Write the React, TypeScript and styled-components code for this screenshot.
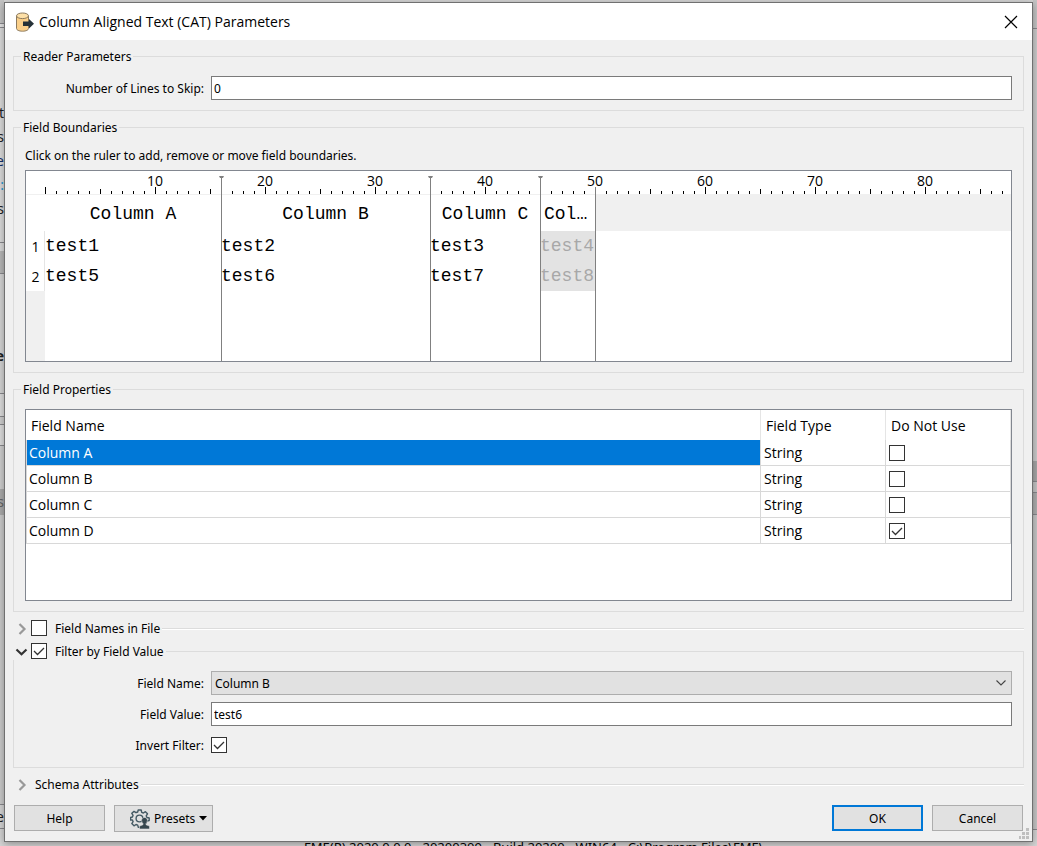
import React, { useId, useState } from "react";
import styled, { createGlobalStyle, css } from "styled-components";

const smallFont = css`
  font: 12px/16px "Noto Sans", "Open Sans", sans-serif;
`;
const largeFont = css`
  font: 14px/20px "Open Sans", "Noto Sans", sans-serif;
`;

const GlobalStyle = createGlobalStyle`
  *, *::before, *::after { box-sizing: border-box; }
  body { margin: 0; background: #d6d6d6; color: #000; ${smallFont} }
`;

const Desktop = styled.div`
  position: relative;
  min-height: 100vh;
  padding: 2px 4px 4px;
  display: flex;
  overflow: hidden;
`;

/* ---- windows that peek out behind the dialog ---- */
const SideStrip = styled.div<{ $side: "left" | "right" }>`
  position: absolute;
  top: 0;
  bottom: 0;
  ${(p) => p.$side}: 0;
  width: 4px;
  overflow: hidden;
  display: flex;
  flex-direction: column;
`;
const Segment = styled.div<{ $h: number; $bg: string; $line?: boolean; $color?: string; $bold?: boolean }>`
  flex: none;
  height: ${(p) => p.$h}px;
  background: ${(p) => p.$bg};
  color: ${(p) => p.$color ?? "#222"};
  border-bottom: ${(p) => (p.$line ? "1px solid #8a8a8e" : "none")};
  font-size: 14px;
  line-height: 20px;
  font-weight: ${(p) => (p.$bold ? 700 : 400)};
  display: flex;
  justify-content: flex-end;
  align-items: center;
`;
const StatusText = styled.div`
  position: absolute;
  left: 304px;
  bottom: -9px;
  white-space: nowrap;
  font-size: 13px;
  line-height: 16px;
`;

/* ---- dialog shell ---- */
const Dialog = styled.main`
  position: relative;
  flex: 1;
  min-width: 0;
  display: flex;
  flex-direction: column;
  background: #f0f0f0;
  border: 1px solid #707070;
  box-shadow: 0 2px 8px rgba(0, 0, 0, 0.35);
`;
const TitleBar = styled.header`
  display: flex;
  align-items: center;
  gap: 4px;
  height: 37px;
  padding: 0 10px;
  background: #fff;
`;
const Title = styled.h1`
  ${largeFont}
  margin: 0;
  flex: 1;
`;
const CloseButton = styled.button`
  display: grid;
  place-items: center;
  width: 22px;
  height: 22px;
  padding: 0;
  border: 0;
  background: none;
`;
const Body = styled.form`
  flex: 1;
  display: flex;
  flex-direction: column;
  padding: 8px 8px 9px;
`;

/* ---- check boxes ---- */
const CheckShell = styled.span`
  display: grid;
  width: 16px;
  height: 16px;
  > * { grid-area: 1 / 1; }
  > svg { pointer-events: none; }
`;
const CheckInput = styled.input`
  appearance: none;
  margin: 0;
  width: 16px;
  height: 16px;
  border: 1px solid #333;
  background: #fff;
`;

/* ---- groups ---- */
const Group = styled.fieldset`
  margin: 0 0 8px;
  min-width: 0;
  border: 1px solid #dcdcdc;
  padding: 11px 11px 10px;
`;
const Legend = styled.legend`
  height: 17px;
  line-height: 17px;
  margin-left: -4px;
  padding: 0 2px;
`;
const ToggleLegend = styled.legend`
  margin-left: -12px;
  padding: 0 2px 0 0;
  background: #f0f0f0;
`;
const SectionHead = styled.div`
  display: flex;
  align-items: center;
  height: 17px;
  padding-left: 1px;
  white-space: nowrap;
  > ${CheckShell} { align-self: flex-start; }
`;
const SectionLabel = styled.label`
  margin-left: 8px;
`;
const PlainSectionLabel = styled.span`
  margin-left: 4px;
`;
const SectionRule = styled.span`
  flex: 1;
  margin-left: 2px;
  height: 2px;
  background: #dcdcdc;
  border-bottom: 1px solid #fff;
`;
const FoldButton = styled.button`
  display: grid;
  place-items: center;
  width: 14px;
  height: 16px;
  margin-right: 3px;
  padding: 0;
  border: 0;
  background: none;
`;
const CollapsedSection = styled.section<{ $gap: number }>`
  margin-bottom: ${(p) => p.$gap}px;
`;

/* ---- form rows ---- */
const FormGrid = styled.div`
  display: grid;
  grid-template-columns: 179px minmax(0, 1fr);
  grid-auto-rows: 24px;
  gap: 7px;
  align-items: center;
`;
const FormLabel = styled.label`
  padding-top: 2px;
  text-align: right;
`;
const TextInput = styled.input`
  ${smallFont}
  width: 100%;
  height: 24px;
  padding: 0 2px;
  border: 1px solid #7a7a7a;
  border-radius: 0;
  background: #fff;
  color: #000;
  outline: none;
`;
const SelectShell = styled.div`
  display: grid;
  align-items: center;
  > * { grid-area: 1 / 1; }
  > svg { justify-self: end; margin-right: 6px; pointer-events: none; }
`;
const Select = styled.select`
  ${smallFont}
  appearance: none;
  width: 100%;
  height: 24px;
  padding: 2px 3px 0;
  border: 1px solid #adadad;
  border-radius: 0;
  background: #e1e1e1;
  color: #000;
`;

/* ---- ruler preview ---- */
const Hint = styled.p`
  margin: 0;
  padding: 1px 0 6px;
`;
const Preview = styled.div`
  position: relative;
  height: 192px;
  overflow: hidden;
  border: 1px solid #828790;
  background: linear-gradient(#f0f0f0, #f0f0f0) 0 120px / 19px 100% no-repeat #fff;
`;
const tick = "linear-gradient(90deg, #000 1px, transparent 1px)";
const Ruler = styled.div`
  height: 23px;
  margin-left: 19px;
  padding-left: 55px;
  display: flex;
  overflow: hidden;
  background-image: ${tick}, ${tick}, ${tick};
  background-size: 11px 3px, 55px 5px, 110px 7px;
  background-position: 0 20px, 0 18px, 110px 16px;
  background-repeat: repeat-x;
`;
const RulerMark = styled.span`
  ${largeFont}
  flex: none;
  width: 110px;
  height: 16px;
  overflow: hidden;
  text-align: center;
`;
const PreviewTable = styled.table`
  width: 100%;
  table-layout: fixed;
  border-collapse: collapse;
`;
const PreviewHead = styled.th<{ $filler?: boolean }>`
  height: 37px;
  padding: 3px 4px 0;
  overflow: hidden;
  text-overflow: ellipsis;
  white-space: nowrap;
  font: 18px/24px "Liberation Mono", monospace;
  background: ${(p) => (p.$filler ? "#f0f0f0" : "#fff")};
  box-shadow: ${(p) => (p.$filler ? "none" : "inset 0 1px #f0f0f0")};
`;
const PreviewCell = styled.td<{ $off?: boolean }>`
  height: 30px;
  padding: 0;
  white-space: nowrap;
  font: 18px/24px "Liberation Mono", monospace;
  color: ${(p) => (p.$off ? "#a8a8a8" : "#000")};
  background: ${(p) => (p.$off ? "#e3e3e3" : "none")};
`;
const RowNumber = styled.th`
  ${largeFont}
  height: 30px;
  padding: 2px 0 0;
  text-align: center;
  box-shadow: inset -1px 0 #e5e5e5;
`;
const Boundary = styled.span<{ $at: number; $cap: boolean }>`
  position: absolute;
  left: ${(p) => 19 + p.$at * 11}px;
  top: ${(p) => (p.$cap ? 5 : 16)}px;
  bottom: 0;
  width: 1px;
  background: #808080;
  &::before {
    content: "";
    display: ${(p) => (p.$cap ? "block" : "none")};
    position: absolute;
    left: -2px;
    width: 5px;
    height: 2px;
    background: #808080;
    clip-path: polygon(0 0, 100% 0, 80% 100%, 20% 100%);
  }
`;

/* ---- property table ---- */
const PropertyBox = styled.div`
  height: 192px;
  border: 1px solid #828790;
  background: #fff;
`;
const PropertyTable = styled.table`
  width: 100%;
  table-layout: fixed;
  border-collapse: separate;
  border-spacing: 0;
  ${largeFont}
`;
const PropertyHead = styled.th`
  height: 30px;
  padding: 2px 5px 0;
  font-weight: 400;
  text-align: left;
  border-right: 1px solid #e5e5e5;
`;
const PropertyCell = styled.td<{ $first?: boolean; $selected?: boolean }>`
  height: 26px;
  padding: 0 ${(p) => (p.$first ? 2 : 3)}px;
  border-right: 1px solid #d8d8d8;
  border-bottom: 1px solid #d8d8d8;
  border-left: ${(p) => (p.$first ? "1px solid #d8d8d8" : "none")};
  color: ${(p) => (p.$selected ? "#fff" : "#000")};
  background: ${(p) => (p.$selected ? "#0078d7" : "#fff")};
  background-clip: padding-box;
`;

/* ---- footer ---- */
const Footer = styled.footer`
  display: flex;
  align-items: flex-start;
  gap: 9px;
  margin-top: auto;
  padding: 4px 1px 0;
`;
const Spacer = styled.span`
  flex: 1;
`;
const PushButton = styled.button<{ $primary?: boolean }>`
  ${smallFont}
  width: 91px;
  height: 26px;
  padding: 2px 0 0;
  border: ${(p) => (p.$primary ? "2px solid #0078d7" : "1px solid #adadad")};
  border-radius: 0;
  background: #e1e1e1;
  color: #000;
`;
const MenuButton = styled(PushButton)`
  width: 99px;
  height: 27px;
  padding: 0 0 0 15px;
  display: flex;
  align-items: center;
  gap: 4px;
`;
const Grip = styled.svg`
  position: absolute;
  right: 3px;
  bottom: 2px;
`;

const ReaderIcon = () => (
  <svg width="20" height="20" viewBox="0 0 20 20" aria-hidden="true">
    <path d="M1.5 4v12.500c0 1.500 2.500 2.700 6 2.700s6-1.200 6-2.700V4z" fill="#fbd08a" stroke="#8c7a5e" />
    <ellipse cx="7.500" cy="3.800" rx="6" ry="2.800" fill="#fde0a8" stroke="#8c7a5e" />
    <path d="M8 9.500h6V7l5 4.800-5 4.700V14H8z" fill="#263238" />
  </svg>
);

const PresetsIcon = () => (
  <svg width="20" height="20" viewBox="0 0 20 20" aria-hidden="true" fill="none">
    <path
      d="M8.200 1h3l.5 2.300 1.700.7 2-1.300 2.100 2.100-1.300 2 .7 1.700 2.300.5v2.500l-2.300.5-.7 1.700-5 4.500H8.200l-.5-2-1.700-.7-2 1.300-2.200-2.200 1.300-2-.7-1.600L.600 11V8.500L2.400 8l.7-1.700-1.300-2L4 2.400l2 1.300L7.700 3z"
      stroke="#455a64"
      strokeWidth="1.400"
      strokeLinejoin="round"
    />
    <circle cx="9.500" cy="9.500" r="3.400" stroke="#455a64" strokeWidth="1.400" />
    <path
      d="M14.500 8.500c1.800 0 2.900 1.300 2.900 3 0 1.300-.6 2.400-1.400 3.100v1.100l3.500 1.400V20h-10v-2.900l3.500-1.400v-1.100c-.8-.7-1.400-1.800-1.400-3.100 0-1.700 1.100-3 2.900-3z"
      fill="#37474f"
      stroke="#e1e1e1"
      strokeWidth=".6"
    />
  </svg>
);

const FoldIcon = ({ open }: { open: boolean }) =>
  open ? (
    <svg width="14" height="12" viewBox="0 0 14 12" aria-hidden="true">
      <path d="M2.500 3.500 7.500 8.200 12.500 3.500" fill="none" stroke="#333" strokeWidth="2.200" />
    </svg>
  ) : (
    <svg width="14" height="12" viewBox="0 0 14 12" aria-hidden="true">
      <path d="M5.500 1l5 5-5 5" fill="none" stroke="#999" strokeWidth="2.200" />
    </svg>
  );

function CheckBox({ id, label, initial = false }: { id?: string; label?: string; initial?: boolean }) {
  const [on, setOn] = useState(initial);
  return (
    <CheckShell>
      <CheckInput id={id} type="checkbox" aria-label={label} checked={on} onChange={() => setOn(!on)} />
      {on && (
        <svg width="16" height="16" viewBox="0 0 16 16" aria-hidden="true">
          <path d="M3 8l3.500 3.500L13 5" fill="none" stroke="#333" strokeWidth="1.300" />
        </svg>
      )}
    </CheckShell>
  );
}

const rulerMarks = [10, 20, 30, 40, 50, 60, 70, 80];
const fields = [
  { name: "Column A", width: 16, values: ["test1", "test5"], unused: false },
  { name: "Column B", width: 19, values: ["test2", "test6"], unused: false },
  { name: "Column C", width: 10, values: ["test3", "test7"], unused: false },
  { name: "Column D", width: 5, values: ["test4", "test8"], unused: true },
];
const boundaries = [16, 35, 45, 50];

const leftStrip = [
  { h: 24, bg: "#c4c4c4", line: true },
  { h: 4, bg: "#e6e6e6", line: true },
  { h: 73, bg: "#dcdcdc" },
  { h: 24, bg: "#dcdcdc", text: "t" },
  { h: 24, bg: "#dcdcdc", text: "s" },
  { h: 24, bg: "#dcdcdc", text: "e", color: "#14306b" },
  { h: 24, bg: "#dcdcdc", text: ":", color: "#1e9ad6" },
  { h: 24, bg: "#dcdcdc", text: "s" },
  { h: 22, bg: "#dcdcdc", line: true },
  { h: 8, bg: "#dcdcdc" },
  { h: 23, bg: "#b8b8b8", line: true },
  { h: 70, bg: "#d6d6d6" },
  { h: 24, bg: "#d6d6d6", text: "e", bold: true },
  { h: 26, bg: "#d6d6d6", line: true },
  { h: 23, bg: "#dedede", line: true },
  { h: 8, bg: "#d0d0d0", line: true },
  { h: 21, bg: "#dedede", line: true },
  { h: 43, bg: "#d0d0d0" },
  { h: 26, bg: "#acacac", text: "s", color: "#666" },
  { h: 290, bg: "#cccccc", line: true },
  { h: 24, bg: "#d6d6d6", text: "e", line: true },
];
const rightStrip = [
  { h: 29, bg: "#c6c6c6", line: true },
  { h: 432, bg: "#cdcdcd" },
  { h: 21, bg: "#a8a8a8", line: true },
  { h: 11, bg: "#c6c6c6", line: true },
  { h: 22, bg: "#b0b0b0", line: true },
  { h: 315, bg: "#c8c8c8", line: true },
];

type StripPart = { h: number; bg: string; line?: boolean; text?: string; color?: string; bold?: boolean };
const Strip = ({ side, parts }: { side: "left" | "right"; parts: StripPart[] }) => (
  <SideStrip $side={side} aria-hidden="true">
    {parts.map((p, i) => (
      <Segment key={i} $h={p.h} $bg={p.bg} $line={p.line} $color={p.color} $bold={p.bold}>
        {p.text}
      </Segment>
    ))}
  </SideStrip>
);

export default function App() {
  const id = useId();
  const [skip, setSkip] = useState("0");
  const [value, setValue] = useState("test6");
  return (
    <>
      <GlobalStyle />
      <Desktop>
        <Strip side="left" parts={leftStrip} />
        <Strip side="right" parts={rightStrip} />
        <StatusText aria-hidden="true">FME(R) 2020.0.0.0 - 20200309 - Build 20200 - WIN64 - C:\Program Files\FME\</StatusText>
        <Dialog>
          <TitleBar>
            <ReaderIcon />
            <Title>Column Aligned Text (CAT) Parameters</Title>
            <CloseButton type="button" aria-label="Close">
              <svg width="14" height="14" viewBox="0 0 14 14" aria-hidden="true">
                <path d="M1 1l12 12M13 1 1 13" stroke="#000" strokeWidth="1.200" />
              </svg>
            </CloseButton>
          </TitleBar>
          <Body onSubmit={(e) => e.preventDefault()}>
            <Group>
              <Legend>Reader Parameters</Legend>
              <FormGrid>
                <FormLabel htmlFor={id + "skip"}>Number of Lines to Skip:</FormLabel>
                <TextInput id={id + "skip"} value={skip} onChange={(e) => setSkip(e.target.value)} />
              </FormGrid>
            </Group>

            <Group>
              <Legend>Field Boundaries</Legend>
              <Hint>Click on the ruler to add, remove or move field boundaries.</Hint>
              <Preview>
                <Ruler>
                  {rulerMarks.map((m) => (
                    <RulerMark key={m}>{m}</RulerMark>
                  ))}
                </Ruler>
                <PreviewTable>
                  <colgroup>
                    <col style={{ width: 19 }} />
                    {fields.map((f) => (
                      <col key={f.name} style={{ width: f.width * 11 }} />
                    ))}
                    <col />
                  </colgroup>
                  <thead>
                    <tr>
                      <PreviewHead />
                      {fields.map((f) => (
                        <PreviewHead key={f.name}>{f.name}</PreviewHead>
                      ))}
                      <PreviewHead $filler />
                    </tr>
                  </thead>
                  <tbody>
                    {[0, 1].map((row) => (
                      <tr key={row}>
                        <RowNumber>{row + 1}</RowNumber>
                        {fields.map((f) => (
                          <PreviewCell key={f.name} $off={f.unused}>
                            {f.values[row]}
                          </PreviewCell>
                        ))}
                        <PreviewCell />
                      </tr>
                    ))}
                  </tbody>
                </PreviewTable>
                {boundaries.map((b) => (
                  <Boundary key={b} $at={b} $cap={b !== 50} />
                ))}
              </Preview>
            </Group>

            <Group>
              <Legend>Field Properties</Legend>
              <PropertyBox>
                <PropertyTable>
                  <colgroup>
                    <col />
                    <col style={{ width: 125 }} />
                    <col style={{ width: 125 }} />
                  </colgroup>
                  <thead>
                    <tr>
                      <PropertyHead>Field Name</PropertyHead>
                      <PropertyHead>Field Type</PropertyHead>
                      <PropertyHead>Do Not Use</PropertyHead>
                    </tr>
                  </thead>
                  <tbody>
                    {fields.map((f, i) => (
                      <tr key={f.name}>
                        <PropertyCell $first $selected={i === 0}>
                          {f.name}
                        </PropertyCell>
                        <PropertyCell>String</PropertyCell>
                        <PropertyCell>
                          <CheckBox label={"Do not use " + f.name} initial={f.unused} />
                        </PropertyCell>
                      </tr>
                    ))}
                  </tbody>
                </PropertyTable>
              </PropertyBox>
            </Group>

            <CollapsedSection $gap={6}>
              <SectionHead>
                <FoldButton type="button" aria-label="Expand Field Names in File">
                  <FoldIcon open={false} />
                </FoldButton>
                <CheckBox id={id + "names"} />
                <SectionLabel htmlFor={id + "names"}>Field Names in File</SectionLabel>
                <SectionRule />
              </SectionHead>
            </CollapsedSection>

            <Group>
              <ToggleLegend>
                <SectionHead>
                  <FoldButton type="button" aria-label="Collapse Filter by Field Value">
                    <FoldIcon open />
                  </FoldButton>
                  <CheckBox id={id + "filter"} initial />
                  <SectionLabel htmlFor={id + "filter"}>Filter by Field Value</SectionLabel>
                </SectionHead>
              </ToggleLegend>
              <FormGrid>
                <FormLabel htmlFor={id + "name"}>Field Name:</FormLabel>
                <SelectShell>
                  <Select id={id + "name"} defaultValue="Column B">
                    {fields.map((f) => (
                      <option key={f.name}>{f.name}</option>
                    ))}
                  </Select>
                  <svg width="10" height="6" viewBox="0 0 10 6" aria-hidden="true">
                    <path d="M.5 .5 5 5 9.500 .5" fill="none" stroke="#444" strokeWidth="1.100" />
                  </svg>
                </SelectShell>
                <FormLabel htmlFor={id + "value"}>Field Value:</FormLabel>
                <TextInput id={id + "value"} value={value} onChange={(e) => setValue(e.target.value)} />
                <FormLabel htmlFor={id + "invert"}>Invert Filter:</FormLabel>
                <CheckBox id={id + "invert"} initial />
              </FormGrid>
            </Group>

            <CollapsedSection $gap={8}>
              <SectionHead>
                <FoldButton type="button" aria-label="Expand Schema Attributes">
                  <FoldIcon open={false} />
                </FoldButton>
                <PlainSectionLabel>Schema Attributes</PlainSectionLabel>
                <SectionRule />
              </SectionHead>
            </CollapsedSection>

            <Footer>
              <PushButton type="button">Help</PushButton>
              <MenuButton type="button">
                <PresetsIcon />
                <span>Presets</span>
                <svg width="8" height="5" viewBox="0 0 8 5" aria-hidden="true">
                  <path d="M0 0h8L4 4.500z" fill="#000" />
                </svg>
              </MenuButton>
              <Spacer />
              <PushButton type="submit" $primary>
                OK
              </PushButton>
              <PushButton type="button">Cancel</PushButton>
            </Footer>
          </Body>
          <Grip width="10" height="11" viewBox="0 0 10 11" aria-hidden="true">
            <path d="M7 0h3v3H7zM3 4h3v3H3zM7 4h3v3H7zM0 8h2v3H0zM3 8h3v3H3zM7 8h3v3H7z" fill="#bfbfbf" />
          </Grip>
        </Dialog>
      </Desktop>
    </>
  );
}
